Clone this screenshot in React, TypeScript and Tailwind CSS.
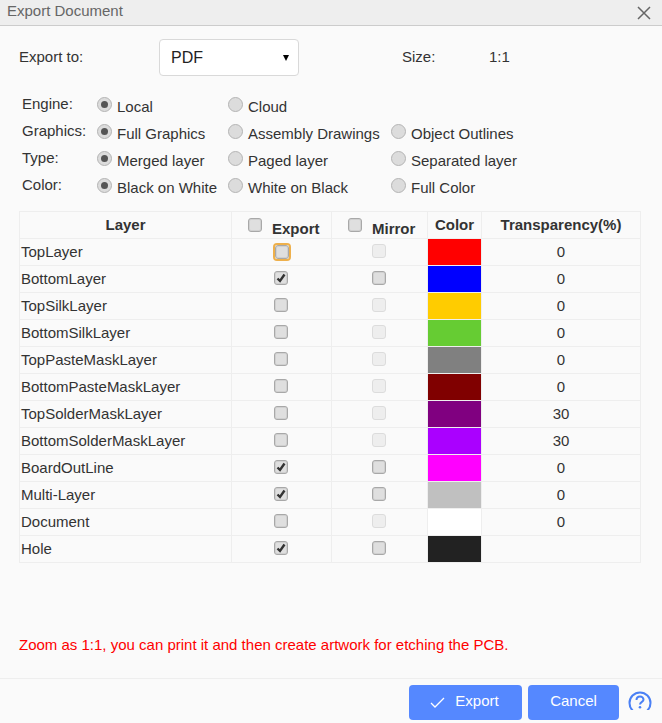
import React from 'react';

interface Layer {
  name: string;
  exported: boolean;
  mirror: boolean | null;
  color: string;
  transparency: string;
}

const layers: Layer[] = [
  { name: 'TopLayer', exported: false, mirror: null, color: 'bg-[#ff0000]', transparency: '0' },
  { name: 'BottomLayer', exported: true, mirror: false, color: 'bg-[#0000ff]', transparency: '0' },
  { name: 'TopSilkLayer', exported: false, mirror: null, color: 'bg-[#ffcc00]', transparency: '0' },
  { name: 'BottomSilkLayer', exported: false, mirror: null, color: 'bg-[#66cc33]', transparency: '0' },
  { name: 'TopPasteMaskLayer', exported: false, mirror: null, color: 'bg-[#808080]', transparency: '0' },
  { name: 'BottomPasteMaskLayer', exported: false, mirror: null, color: 'bg-[#800000]', transparency: '0' },
  { name: 'TopSolderMaskLayer', exported: false, mirror: null, color: 'bg-[#800080]', transparency: '30' },
  { name: 'BottomSolderMaskLayer', exported: false, mirror: null, color: 'bg-[#aa00ff]', transparency: '30' },
  { name: 'BoardOutLine', exported: true, mirror: false, color: 'bg-[#ff00ff]', transparency: '0' },
  { name: 'Multi-Layer', exported: true, mirror: false, color: 'bg-[#c0c0c0]', transparency: '0' },
  { name: 'Document', exported: false, mirror: null, color: 'bg-[#ffffff]', transparency: '0' },
  { name: 'Hole', exported: true, mirror: false, color: 'bg-[#222222]', transparency: '' },
];

const optionRows = [
  { label: 'Engine:', options: ['Local', 'Cloud'] },
  { label: 'Graphics:', options: ['Full Graphics', 'Assembly Drawings', 'Object Outlines'] },
  { label: 'Type:', options: ['Merged layer', 'Paged layer', 'Separated layer'] },
  { label: 'Color:', options: ['Black on White', 'White on Black', 'Full Color'] },
];

const Radio: React.FC<{ checked: boolean }> = ({ checked }) => (
  <span className="mt-[1px] flex h-[15px] w-[15px] shrink-0 items-center justify-center rounded-full border border-[#b4b4b4] bg-[#dcdcdc]">
    {checked && <span className="h-[7px] w-[7px] rounded-full bg-[#555555]" />}
  </span>
);

const Check: React.FC<{ checked?: boolean; disabled?: boolean }> = ({ checked, disabled }) => (
  <span
    className={`inline-flex h-[14px] w-[14px] shrink-0 items-center justify-center rounded-[3px] border ${
      disabled
        ? 'border-[#dcdcdc] bg-[#eeeeee]'
        : 'border-[#a8a8a8] bg-[#dfdfdf] shadow-[inset_0_0_0_1px_#d0d0d0]'
    }`}
  >
    {checked && (
      <svg width="10" height="10" viewBox="0 0 10 10" fill="none">
        <path d="M1.5 5.5 L4 8 L8.5 1.5" stroke="#333333" strokeWidth="2.4" />
      </svg>
    )}
  </span>
);

export default function App() {
  return (
    <div className="flex h-[723px] w-[662px] flex-col overflow-hidden bg-[#fafafa] font-['Liberation_Sans',Arial,sans-serif] text-[15px] text-[#333333]">
      <div className="flex h-[26px] shrink-0 items-center justify-between border-b border-[#cccccc] bg-[#eeeeee] pl-[7px] pr-[11px]">
        <span className="pb-[2px] text-[#666666]">Export Document</span>
        <svg width="14" height="14" viewBox="0 0 14 14" fill="none" className="mt-[1px]">
          <path d="M1 1 L13 13 M13 1 L1 13" stroke="#666666" strokeWidth="1.5" />
        </svg>
      </div>

      <div className="flex flex-1 flex-col">
        <div className="ml-[19px] mt-[13px] flex h-[37px] items-center">
          <span className="w-[140px]">Export to:</span>
          <div className="flex h-[37px] w-[140px] items-center justify-between rounded-[4px] border border-[#d9d9d9] bg-white pl-[11px] pr-[9px] text-[16px] text-[#222222]">
            PDF
            <span className="h-0 w-0 border-x-[3.5px] border-t-[6px] border-x-transparent border-t-black" />
          </div>
          <span className="ml-[103px] w-[87px]">Size:</span>
          <span>1:1</span>
        </div>

        <div className="ml-[22px] mt-[20px] flex flex-col">
          {optionRows.map((row) => (
            <div key={row.label} className="flex h-[27px] items-start">
              <span className="w-[75px] leading-[16px]">{row.label}</span>
              {row.options.map((opt, i) => (
                <div
                  key={opt}
                  className={`flex items-start gap-[5px] ${i === 0 ? 'w-[131px]' : i === 1 ? 'w-[163px]' : ''}`}
                >
                  <Radio checked={i === 0} />
                  <span className="mt-[3px] whitespace-nowrap leading-[16px]">{opt}</span>
                </div>
              ))}
            </div>
          ))}
        </div>

        <table className="ml-[19px] mt-[7px] w-[621px] table-fixed border-collapse border border-[#eeeeee]">
          <colgroup>
            <col className="w-[212px]" />
            <col className="w-[100px]" />
            <col className="w-[96px]" />
            <col className="w-[54px]" />
            <col className="w-[159px]" />
          </colgroup>
          <thead>
            <tr className="h-[27px] font-bold">
              <th className="border border-[#eeeeee] p-0 font-bold">Layer</th>
              <th className="border border-[#eeeeee] p-0 pl-[16px] pt-[6px] align-top font-bold">
                <span className="flex items-start gap-[10px]">
                  <Check />
                  <span className="mt-[3px] leading-[16px]">Export</span>
                </span>
              </th>
              <th className="border border-[#eeeeee] p-0 pl-[16px] pt-[6px] align-top font-bold">
                <span className="flex items-start gap-[10px]">
                  <Check />
                  <span className="mt-[3px] leading-[16px]">Mirror</span>
                </span>
              </th>
              <th className="border border-[#eeeeee] p-0 font-bold">Color</th>
              <th className="border border-[#eeeeee] p-0 font-bold">Transparency(%)</th>
            </tr>
          </thead>
          <tbody>
            {layers.map((layer, idx) => (
              <tr key={layer.name} className="h-[27px]">
                <td className="border border-[#eeeeee] p-0 pl-[1px]">{layer.name}</td>
                <td className="border border-[#eeeeee] p-0 text-center">
                  <span
                    className={`inline-flex align-middle ${
                      idx === 0 ? 'mb-[2px] rounded-[2px] outline-2 outline-[#eeb04c]' : 'mb-[4px] mr-[2px]'
                    }`}
                  >
                    <Check checked={layer.exported} />
                  </span>
                </td>
                <td className="border border-[#eeeeee] p-0 text-center">
                  <span className="mb-[4px] mr-[2px] inline-flex align-middle">
                    <Check checked={false} disabled={layer.mirror === null} />
                  </span>
                </td>
                <td className="border border-[#eeeeee] p-0">
                  <div className={`h-[26px] w-full ${layer.color}`} />
                </td>
                <td className="border border-[#eeeeee] p-0 text-center">{layer.transparency}</td>
              </tr>
            ))}
          </tbody>
        </table>

        <p className="ml-[19px] mt-[74px] leading-[16px] text-[#ff0000]">
          Zoom as 1:1, you can print it and then create artwork for etching the PCB.
        </p>
      </div>

      <div className="flex h-[45px] shrink-0 items-start border-t border-[#eeeeee] pl-[409px] pt-[6px]">
        <button className="flex h-[35px] w-[113px] items-center justify-center gap-[10px] rounded-[4px] bg-[#5588ff] pb-[2px] pr-[2px] text-[15px] text-white">
          <svg width="15" height="11" viewBox="0 0 15 11" fill="none" className="mt-[2px]">
            <path d="M1 6 L5 10 L14 1" stroke="#ffffff" strokeWidth="1.3" />
          </svg>
          Export
        </button>
        <button className="ml-[6px] h-[35px] w-[91px] rounded-[4px] bg-[#5588ff] pb-[2px] text-[15px] text-white">
          Cancel
        </button>
        <div className="ml-[9px] mt-[6px] h-[19px] w-[24px] overflow-hidden">
          <svg width="24" height="24" viewBox="0 0 24 24" fill="none">
            <circle cx="12" cy="12" r="10.5" stroke="#4a80f5" strokeWidth="2" />
            <path
              d="M8.5 9 C8.5 7 10 5.5 12 5.5 C14 5.5 15.5 7 15.5 8.7 C15.5 10.8 12 11 12 13.5"
              stroke="#4a80f5"
              strokeWidth="2"
            />
            <circle cx="12" cy="16.3" r="1.3" fill="#4a80f5" />
          </svg>
        </div>
      </div>
    </div>
  );
}
